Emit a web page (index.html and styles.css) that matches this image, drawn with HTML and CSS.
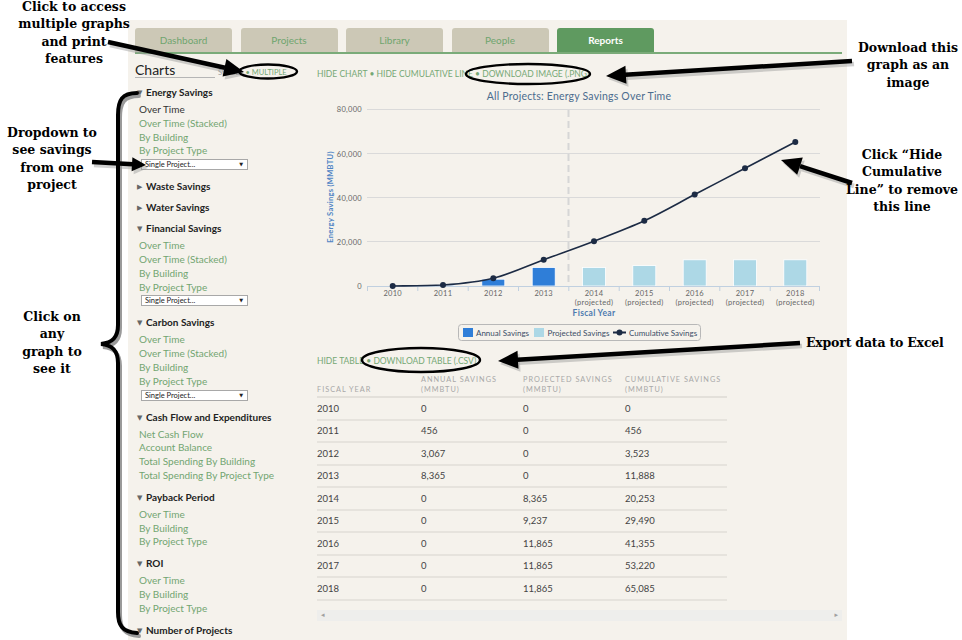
FILE: index.html
```html
<!DOCTYPE html>
<html>
<head>
<meta charset="utf-8">
<title>Reports</title>
<link rel="stylesheet" href="styles.css">
</head>
<body>
<div class="page">
  <div class="app">
    <nav class="tabs">
      <a class="tab">Dashboard</a>
      <a class="tab">Projects</a>
      <a class="tab">Library</a>
      <a class="tab">People</a>
      <a class="tab active">Reports</a>
    </nav>
    <div class="content">
      <aside class="sidebar">
        <div class="charts-head">
          <h2>Charts</h2>
          <span class="mode"><span class="mode-off">SINGLE</span> • MULTIPLE</span>
        </div>

        <div class="sec">
          <div class="sec-h"><span class="tri">▼</span>Energy Savings</div>
          <ul class="items">
            <li class="cur">Over Time</li>
            <li>Over Time (Stacked)</li>
            <li>By Building</li>
            <li>By Project Type</li>
          </ul>
          <div class="sel"><span>Single Project...</span><span class="sel-arrow">▼</span></div>
        </div>

        <div class="sec closed">
          <div class="sec-h"><span class="tri">▶</span>Waste Savings</div>
        </div>

        <div class="sec closed">
          <div class="sec-h"><span class="tri">▶</span>Water Savings</div>
        </div>

        <div class="sec">
          <div class="sec-h"><span class="tri">▼</span>Financial Savings</div>
          <ul class="items">
            <li>Over Time</li>
            <li>Over Time (Stacked)</li>
            <li>By Building</li>
            <li>By Project Type</li>
          </ul>
          <div class="sel"><span>Single Project...</span><span class="sel-arrow">▼</span></div>
        </div>

        <div class="sec">
          <div class="sec-h"><span class="tri">▼</span>Carbon Savings</div>
          <ul class="items">
            <li>Over Time</li>
            <li>Over Time (Stacked)</li>
            <li>By Building</li>
            <li>By Project Type</li>
          </ul>
          <div class="sel"><span>Single Project...</span><span class="sel-arrow">▼</span></div>
        </div>

        <div class="sec">
          <div class="sec-h"><span class="tri">▼</span>Cash Flow and Expenditures</div>
          <ul class="items">
            <li>Net Cash Flow</li>
            <li>Account Balance</li>
            <li>Total Spending By Building</li>
            <li>Total Spending By Project Type</li>
          </ul>
        </div>

        <div class="sec">
          <div class="sec-h"><span class="tri">▼</span>Payback Period</div>
          <ul class="items">
            <li>Over Time</li>
            <li>By Building</li>
            <li>By Project Type</li>
          </ul>
        </div>

        <div class="sec">
          <div class="sec-h"><span class="tri">▼</span>ROI</div>
          <ul class="items">
            <li>Over Time</li>
            <li>By Building</li>
            <li>By Project Type</li>
          </ul>
        </div>

        <div class="sec">
          <div class="sec-h"><span class="tri">▼</span>Number of Projects</div>
        </div>
      </aside>

      <main class="main">
        <div class="toolbar">HIDE CHART • HIDE CUMULATIVE LINE • DOWNLOAD IMAGE (.PNG)</div>

        <svg class="chart" viewBox="317 86 525 262" width="525" height="262">
          <text class="c-title" x="579" y="100" text-anchor="middle">All Projects: Energy Savings Over Time</text>
          <g class="grid">
            <line x1="367" y1="109.5" x2="820" y2="109.5"/>
            <line x1="367" y1="153.5" x2="820" y2="153.5"/>
            <line x1="367" y1="197.5" x2="820" y2="197.5"/>
            <line x1="367" y1="241.5" x2="820" y2="241.5"/>
          </g>
          <line class="split" x1="568.5" y1="110" x2="568.5" y2="286"/>
          <g class="bars-a">
            <rect x="431.5" y="285" width="23" height="1"/>
            <rect x="481.8" y="279.2" width="23" height="6.8"/>
            <rect x="532.2" y="267.5" width="23" height="18.5"/>
          </g>
          <g class="bars-p">
            <rect x="582.5" y="267.5" width="23" height="18.5"/>
            <rect x="632.8" y="265.6" width="23" height="20.4"/>
            <rect x="683.2" y="259.8" width="23" height="26.2"/>
            <rect x="733.5" y="259.8" width="23" height="26.2"/>
            <rect x="783.8" y="259.8" width="23" height="26.2"/>
          </g>
          <line class="axis" x1="367" y1="286.5" x2="820" y2="286.5"/>
          <g class="ticks">
            <line x1="367.5" y1="286.5" x2="367.5" y2="291"/>
            <line x1="417.8" y1="286.5" x2="417.8" y2="291"/>
            <line x1="468.2" y1="286.5" x2="468.2" y2="291"/>
            <line x1="518.5" y1="286.5" x2="518.5" y2="291"/>
            <line x1="568.8" y1="286.5" x2="568.8" y2="291"/>
            <line x1="619.2" y1="286.5" x2="619.2" y2="291"/>
            <line x1="669.5" y1="286.5" x2="669.5" y2="291"/>
            <line x1="719.8" y1="286.5" x2="719.8" y2="291"/>
            <line x1="770.2" y1="286.5" x2="770.2" y2="291"/>
            <line x1="819.5" y1="286.5" x2="819.5" y2="291"/>
          </g>
          <g class="ylab" text-anchor="end">
            <text x="362" y="112">80,000</text>
            <text x="362" y="156.5">60,000</text>
            <text x="362" y="200.5">40,000</text>
            <text x="362" y="244.5">20,000</text>
            <text x="362" y="289">0</text>
          </g>
          <g class="xlab" text-anchor="middle">
            <text x="392.7" y="295.5">2010</text>
            <text x="443" y="295.5">2011</text>
            <text x="493.3" y="295.5">2012</text>
            <text x="543.7" y="295.5">2013</text>
            <text x="594" y="295.5">2014</text>
            <text x="594" y="304.5">(projected)</text>
            <text x="644.3" y="295.5">2015</text>
            <text x="644.3" y="304.5">(projected)</text>
            <text x="694.7" y="295.5">2016</text>
            <text x="694.7" y="304.5">(projected)</text>
            <text x="745" y="295.5">2017</text>
            <text x="745" y="304.5">(projected)</text>
            <text x="795.3" y="295.5">2018</text>
            <text x="795.3" y="304.5">(projected)</text>
          </g>
          <text class="axis-title" x="594" y="315.5" text-anchor="middle">Fiscal Year</text>
          <text class="axis-title ytitle" x="333" y="197" text-anchor="middle" transform="rotate(-90 333 197)">Energy Savings (MMBTU)</text>
          <path class="cum" d="M392.7 286 C401.1 285.8 426.2 285.9 443 285 C459.8 283.7 476.5 282.4 493.3 278.2 C510.1 274 526.9 265.9 543.7 259.7 C560.5 253.5 577.2 247.7 594 241.2 C610.8 234.7 627.5 228.6 644.3 220.8 C661.1 213 677.9 203.3 694.7 194.5 C711.5 185.7 728.2 177 745 168.2 C761.8 159.5 786.9 146.4 795.3 142"/>
          <g class="dots">
            <circle cx="392.7" cy="286" r="3"/>
            <circle cx="443" cy="285" r="3"/>
            <circle cx="493.3" cy="278.2" r="3"/>
            <circle cx="543.7" cy="259.7" r="3"/>
            <circle cx="594" cy="241.2" r="3"/>
            <circle cx="644.3" cy="220.8" r="3"/>
            <circle cx="694.7" cy="194.5" r="3"/>
            <circle cx="745" cy="168.2" r="3"/>
            <circle cx="795.3" cy="142" r="3"/>
          </g>
          <g class="legend">
            <rect class="lg-box" x="458.5" y="324.5" width="242" height="16" rx="3"/>
            <rect x="463" y="328" width="10" height="9" fill="#2f7ed8"/>
            <text x="476" y="335.5">Annual Savings</text>
            <rect x="534" y="328" width="10" height="9" fill="#add8e6"/>
            <text x="547.5" y="335.5">Projected Savings</text>
            <line x1="613" y1="332.5" x2="626" y2="332.5" stroke="#1c2b44" stroke-width="2"/>
            <circle cx="619.5" cy="332.5" r="3" fill="#1c2b44"/>
            <text x="629" y="335.5">Cumulative Savings</text>
          </g>
        </svg>

        <div class="toolbar table-tools">HIDE TABLE • DOWNLOAD TABLE (.CSV)</div>

        <table class="data">
          <thead>
            <tr>
              <th class="c1">FISCAL YEAR</th>
              <th class="c2">ANNUAL SAVINGS<br>(MMBTU)</th>
              <th class="c3">PROJECTED SAVINGS<br>(MMBTU)</th>
              <th class="c4">CUMULATIVE SAVINGS<br>(MMBTU)</th>
            </tr>
          </thead>
          <tbody>
            <tr><td>2010</td><td>0</td><td>0</td><td>0</td></tr>
            <tr><td>2011</td><td>456</td><td>0</td><td>456</td></tr>
            <tr><td>2012</td><td>3,067</td><td>0</td><td>3,523</td></tr>
            <tr><td>2013</td><td>8,365</td><td>0</td><td>11,888</td></tr>
            <tr><td>2014</td><td>0</td><td>8,365</td><td>20,253</td></tr>
            <tr><td>2015</td><td>0</td><td>9,237</td><td>29,490</td></tr>
            <tr><td>2016</td><td>0</td><td>11,865</td><td>41,355</td></tr>
            <tr><td>2017</td><td>0</td><td>11,865</td><td>53,220</td></tr>
            <tr><td>2018</td><td>0</td><td>11,865</td><td>65,085</td></tr>
          </tbody>
        </table>

        <div class="hscroll"><span>◂</span><span>▸</span></div>
      </main>
    </div>
  </div>

  <svg class="marks" viewBox="0 0 962 640" width="962" height="640">
    <g class="shadow" transform="translate(2 3)">
      <line x1="108" y1="42" x2="225" y2="67.7"/>
      <polygon points="244,72 222.6,76.5 226.4,58.9"/>
      <line x1="852" y1="61" x2="625" y2="74.8"/>
      <polygon points="606,76 625.4,65.8 626.5,83.8"/>
      <line x1="852" y1="183" x2="800" y2="166.2"/>
      <polygon points="781,160 802.8,157.6 797.2,174.8"/>
      <line x1="800" y1="343" x2="517" y2="359.8"/>
      <polygon points="498,361 518.5,368.8 517.5,350.8"/>
      <line x1="92" y1="162" x2="133" y2="164.2"/>
      <polygon points="146,165 131.6,171.2 132.4,157.2"/>
      <path class="brace" d="M137 93 C122 93 118 100 118 115 L118 325 C118 338 112 343 101 344 C112 345 118 350 118 363 L118 612 C118 625 122 632 137 633"/>
    </g>
    <g class="ink">
      <line x1="108" y1="42" x2="225" y2="67.7"/>
      <polygon points="244,72 222.6,76.5 226.4,58.9"/>
      <line x1="852" y1="61" x2="625" y2="74.8"/>
      <polygon points="606,76 625.4,65.8 626.5,83.8"/>
      <line x1="852" y1="183" x2="800" y2="166.2"/>
      <polygon points="781,160 802.8,157.6 797.2,174.8"/>
      <line x1="800" y1="343" x2="517" y2="359.8"/>
      <polygon points="498,361 518.5,368.8 517.5,350.8"/>
      <line x1="92" y1="162" x2="133" y2="164.2"/>
      <polygon points="146,165 131.6,171.2 132.4,157.2"/>
      <path class="brace" d="M137 93 C122 93 118 100 118 115 L118 325 C118 338 112 343 101 344 C112 345 118 350 118 363 L118 612 C118 625 122 632 137 633"/>
    </g>
    <g class="rings">
      <ellipse cx="268" cy="71.5" rx="29" ry="7"/>
      <ellipse cx="528" cy="74" rx="62" ry="10"/>
      <ellipse cx="421" cy="360" rx="59" ry="12"/>
    </g>
  </svg>

  <div class="note n-multi">Click to access<br>multiple graphs<br>and print<br>features</div>
  <div class="note n-image">Download this<br>graph as an<br>image</div>
  <div class="note n-line">Click “Hide<br>Cumulative<br>Line” to remove<br>this line</div>
  <div class="note n-excel">Export data to Excel</div>
  <div class="note n-drop">Dropdown to<br>see savings<br>from one<br>project</div>
  <div class="note n-click">Click on<br>any<br>graph to<br>see it</div>
</div>
</body>
</html>
```

FILE: styles.css
```css
* { box-sizing: border-box; margin: 0; padding: 0; }

html, body {
  width: 962px;
  height: 640px;
  overflow: hidden;
  background: #ffffff;
}

body {
  font-family: Lato, "Noto Sans", sans-serif;
  color: #333;
}

.page {
  position: relative;
  width: 962px;
  height: 640px;
  padding-top: 20px;
}

.app {
  margin-left: 128px;
  width: 719px;
  height: 620px;
  background: #f5f2ec;
  padding: 8px 5px 0 7px;
  overflow: hidden;
}

/* tabs */
.tabs {
  display: flex;
  gap: 8.5px;
  border-bottom: 2px solid #7aab79;
}

.tab {
  width: 97px;
  height: 24px;
  line-height: 24px;
  text-align: center;
  font-size: 10px;
  color: #6fa56e;
  background: #ccc8b6;
  border-radius: 3px 3px 0 0;
}

.tab.active {
  background: #5f9a60;
  color: #ffffff;
  font-weight: 700;
}

.content {
  display: flex;
  align-items: flex-start;
}

/* sidebar */
.sidebar {
  width: 165px;
  flex: 0 0 165px;
}

.charts-head {
  display: flex;
  align-items: flex-end;
  margin-top: 9px;
  margin-bottom: 7px;
}

.charts-head h2 {
  width: 80px;
  font-size: 14px;
  line-height: 14px;
  font-weight: 400;
  color: #222;
  border-bottom: 1px solid #b5b5b5;
}

.mode {
  margin-left: 3px;
  font-size: 7.5px;
  line-height: 10px;
  color: #76a875;
  white-space: nowrap;
}

.mode-off { color: #9a9a9a; }

.sec { margin-bottom: 7px; }
.sec.closed { margin-bottom: 6px; }

.sec-h {
  font-size: 10px;
  line-height: 14px;
  font-weight: 700;
  color: #222;
  padding-left: 2px;
  white-space: nowrap;
}

.tri {
  display: inline-block;
  width: 9px;
  font-family: "DejaVu Sans", sans-serif;
  font-size: 7px;
  color: #666;
  font-weight: 400;
  vertical-align: 1px;
}

.items {
  list-style: none;
  margin-top: 3px;
  padding-left: 4px;
}

.items li {
  font-size: 10px;
  line-height: 13.8px;
  color: #72a571;
  white-space: nowrap;
}

.items li.cur { color: #333; }

.sel {
  display: flex;
  justify-content: space-between;
  align-items: center;
  width: 107px;
  height: 11px;
  margin: 1px 0 9px 6px;
  padding: 0 4px 0 3px;
  background: #ffffff;
  border: 1px solid #a8a8a8;
  font-size: 7.5px;
  line-height: 9px;
  color: #222;
}

.sel-arrow {
  font-family: "DejaVu Sans", sans-serif;
  font-size: 5px;
}

/* main */
.main {
  flex: 1;
  margin-left: 17px;
}

.toolbar {
  margin-top: 14px;
  font-size: 8.5px;
  line-height: 12px;
  color: #76a875;
  white-space: nowrap;
}

.table-tools { margin-top: 7px; }

.chart {
  display: block;
  margin-top: 6px;
  overflow: visible;
}

.c-title {
  font-family: Lato, sans-serif;
  font-size: 10.5px;
  fill: #4c6c8e;
  letter-spacing: 0.2px;
}

.grid line { stroke: #dadada; stroke-width: 1; }
.split { stroke: #d6d6d6; stroke-width: 2; stroke-dasharray: 7 4; }
.bars-a rect { fill: #2f7ed8; stroke: #fff; stroke-width: 0.8; }
.bars-p rect { fill: #add8e6; stroke: #fff; stroke-width: 0.8; }
.axis { stroke: #c0d0e0; stroke-width: 1; }
.ticks line { stroke: #c0d0e0; stroke-width: 1; }

.ylab text, .xlab text {
  font-family: Lato, sans-serif;
  font-size: 7.5px;
  fill: #666;
  letter-spacing: 0.3px;
}

.axis-title {
  font-family: Lato, sans-serif;
  font-size: 8.5px;
  font-weight: 700;
  fill: #4d7bb0;
  letter-spacing: 0.3px;
}

.ytitle { font-size: 7.5px; fill: #4f84c4; }

.cum { fill: none; stroke: #1c2b44; stroke-width: 1.6; }
.dots circle { fill: #1c2b44; }

.legend text {
  font-family: Lato, sans-serif;
  font-size: 8px;
  fill: #3b4d66;
}

.lg-box { fill: none; stroke: #b8b8b8; stroke-width: 1; }

/* table */
.data {
  margin-top: 6px;
  width: 410px;
  border-collapse: collapse;
  table-layout: fixed;
}

.data th {
  font-size: 7.3px;
  line-height: 10px;
  font-weight: 400;
  letter-spacing: 1px;
  color: #a8a8a8;
  text-align: left;
  vertical-align: bottom;
  padding: 2px 0 1px;
  border-bottom: 2px solid #e3e0da;
  white-space: nowrap;
}

.data .c1 { width: 104px; }
.data .c2, .data .c3, .data .c4 { width: 102px; }

.data td {
  height: 22.5px;
  font-size: 9.5px;
  color: #444;
  vertical-align: middle;
  border-bottom: 2px solid #e6e3dd;
}

.hscroll {
  display: flex;
  justify-content: space-between;
  align-items: center;
  margin-top: 9px;
  width: 525px;
  height: 11px;
  padding: 0 4px;
  background: #eeeeec;
  font-family: "DejaVu Sans", sans-serif;
  font-size: 7px;
  color: #a0a0a0;
}

/* annotations */
.marks {
  position: absolute;
  left: 0;
  top: 0;
  pointer-events: none;
}

.ink line { stroke: #000; stroke-width: 4.5; }
.ink polygon { fill: #000; }
.shadow line { stroke: #9a9a9a; stroke-width: 4.5; opacity: 0.45; }
.shadow polygon { fill: #9a9a9a; opacity: 0.45; }
.brace { fill: none; stroke-width: 4; stroke-linecap: round; }
.ink .brace { stroke: #000; }
.shadow .brace { stroke: #9a9a9a; }
.rings ellipse { fill: none; stroke: #000; stroke-width: 2.4; }

.note {
  position: absolute;
  font-family: "DejaVu Serif", "Liberation Serif", serif;
  font-weight: 700;
  font-size: 12.5px;
  line-height: 17.3px;
  color: #000;
  text-align: center;
  white-space: nowrap;
}

.n-multi { left: 9px; top: -2px; width: 130px; }
.n-image { left: 848px; top: 39px; width: 120px; }
.n-line { left: 837px; top: 146px; width: 130px; }
.n-excel { left: 806px; top: 334px; text-align: left; letter-spacing: -0.2px; }
.n-drop { left: 0; top: 124px; width: 104px; }
.n-click { left: 0; top: 308px; width: 104px; }
```
